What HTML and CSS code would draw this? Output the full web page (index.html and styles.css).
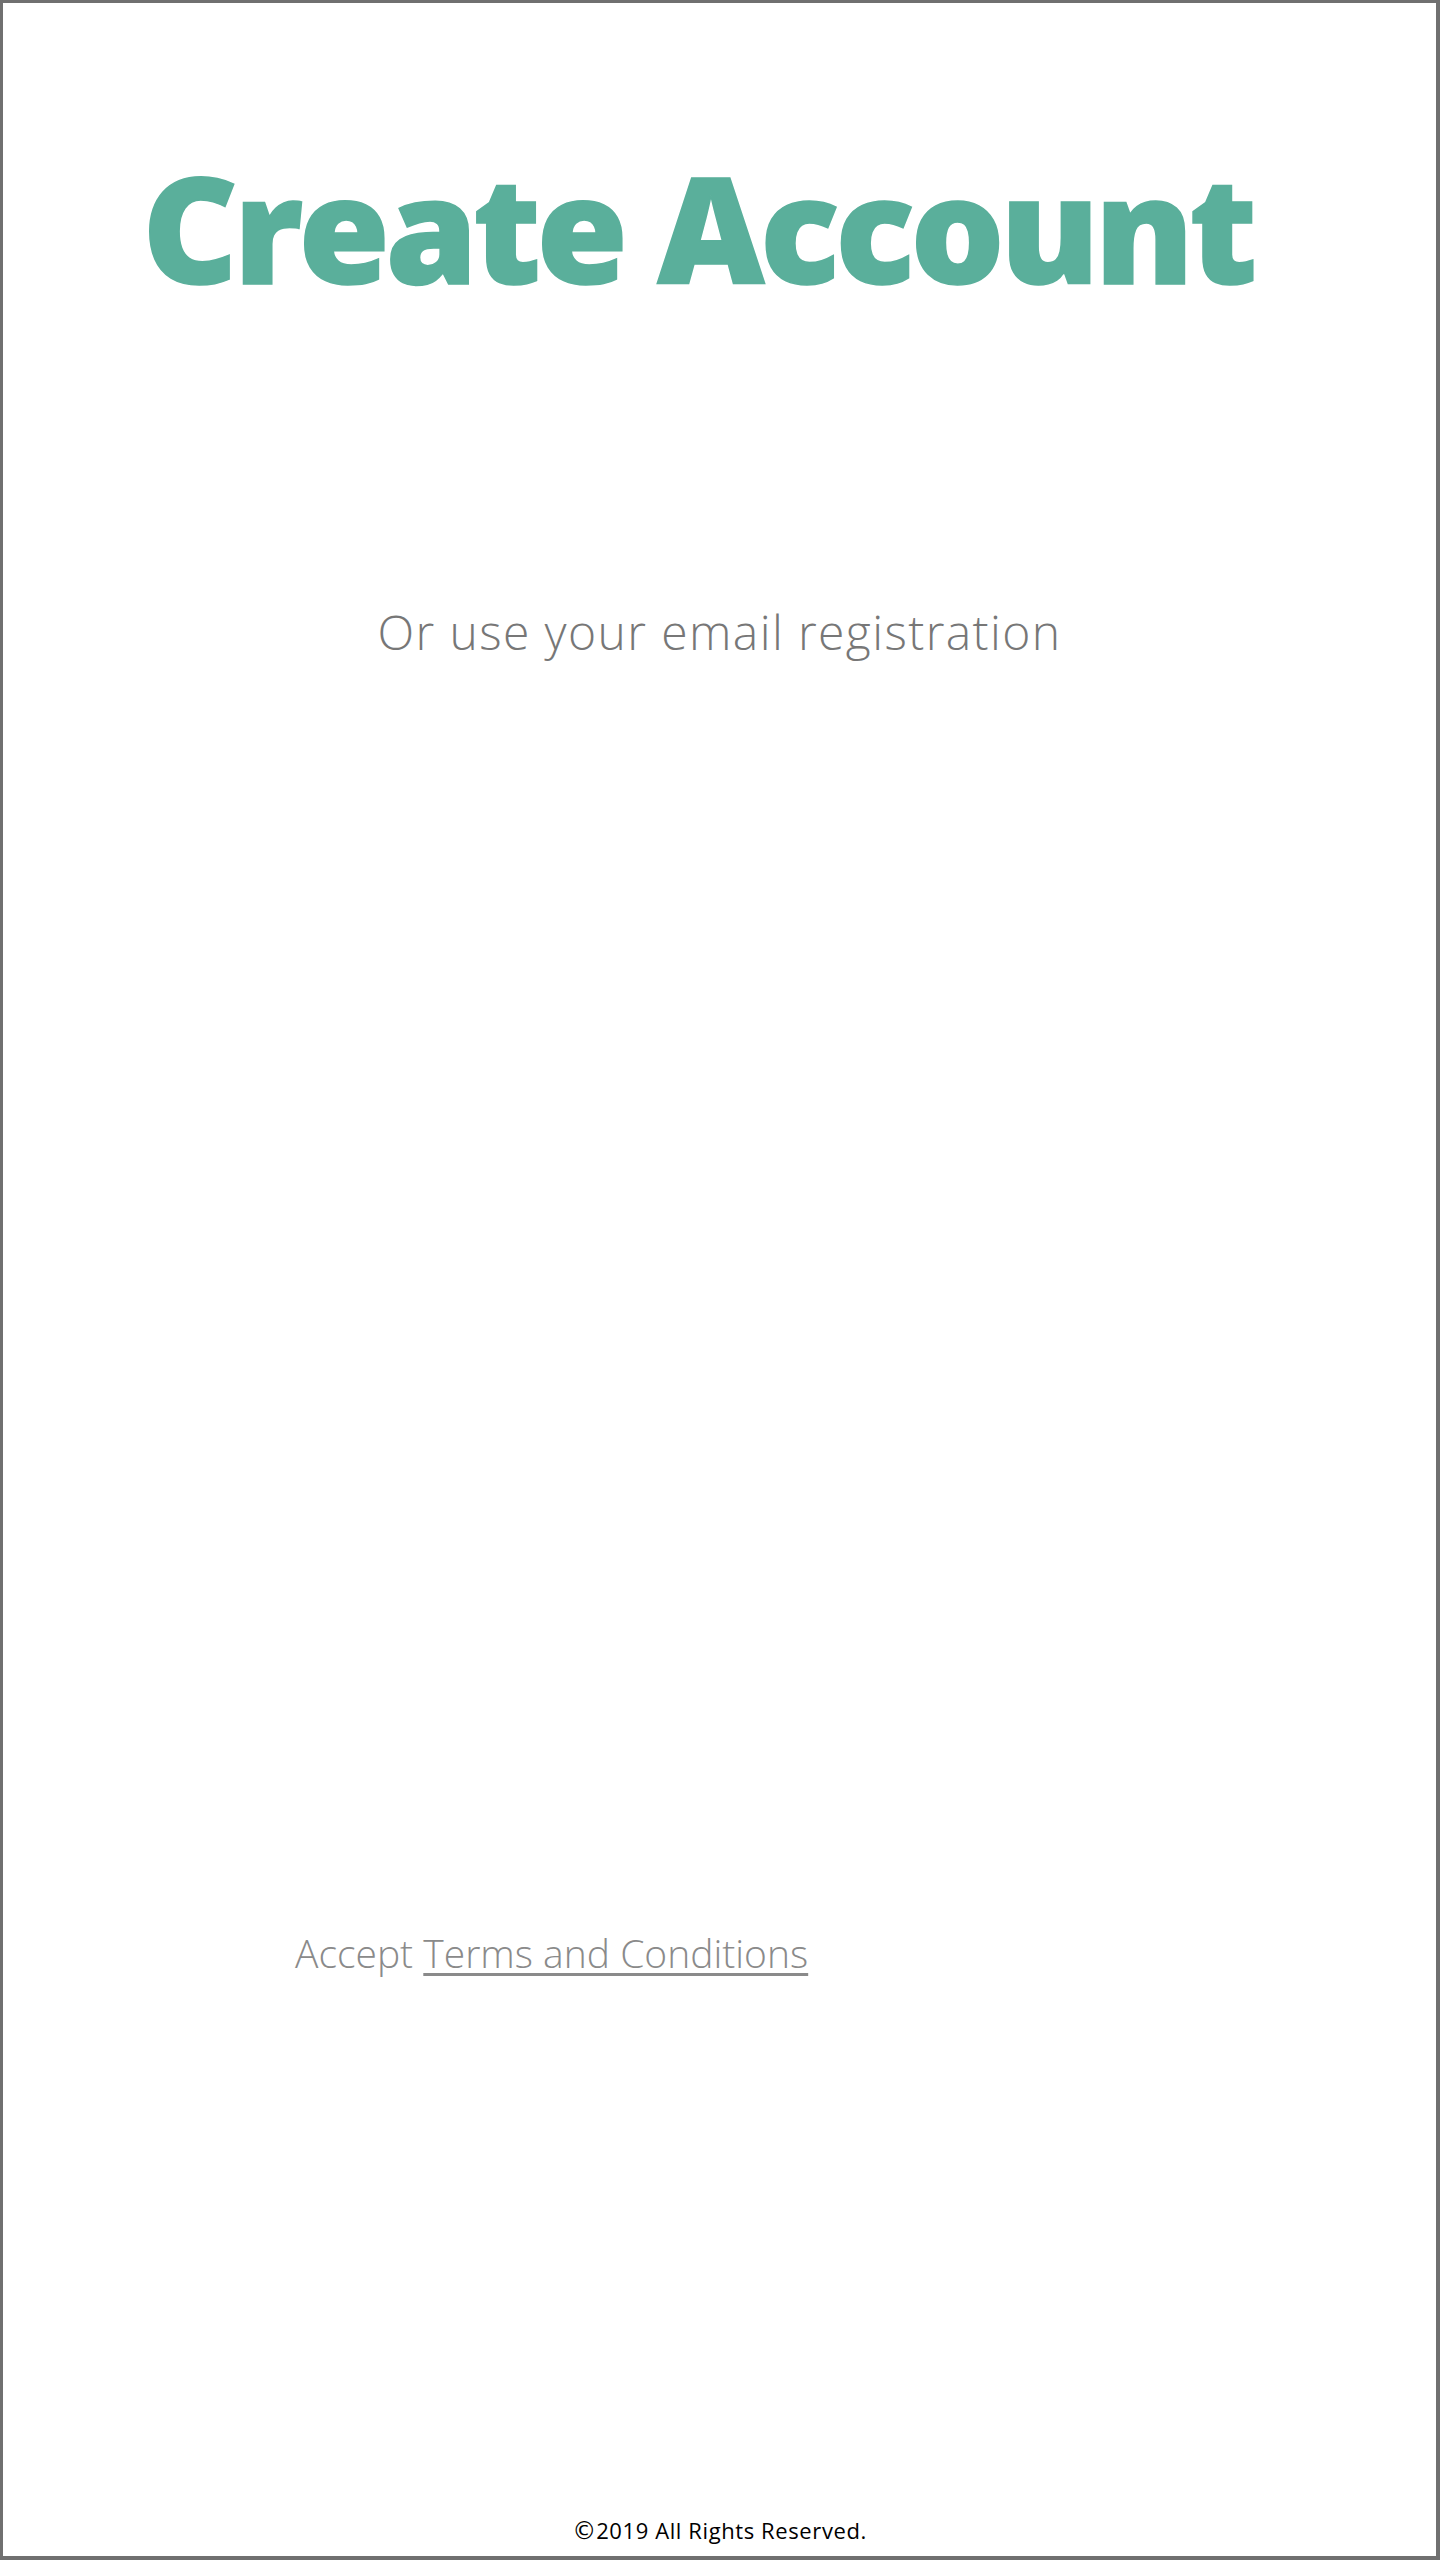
FILE: index.html
```html
<!DOCTYPE html>
<html lang="en">
<head>
<meta charset="utf-8">
<title>Create Account</title>
<link rel="stylesheet" href="styles.css">
</head>
<body>
<div class="page">
  <h1 class="title">Create Account</h1>
  <p class="subtitle">Or use your email registration</p>
  <p class="terms">Accept <a class="terms-link" href="#">Terms and Conditions</a></p>
  <footer class="footer"><span class="copy">©</span>2019 All Rights Reserved.</footer>
</div>
</body>
</html>
```
FILE: styles.css
```css
html, body {
  margin: 0;
  padding: 0;
  background: #ffffff;
}

.page {
  box-sizing: border-box;
  width: 1440px;
  height: 2560px;
  border-style: solid;
  border-color: #707070;
  border-width: 3px 4px 4px 3px;
  display: flex;
  flex-direction: column;
  font-family: "Open Sans", "Noto Sans", sans-serif;
}

.title {
  margin: 150px 0 0;
  padding-right: 44px;
  font-size: 148px;
  line-height: 1;
  font-weight: 800;
  letter-spacing: -4.6px;
  color: #5aaf9b;
  -webkit-text-stroke: 1.5px #5aaf9b;
  text-align: center;
}

.subtitle {
  margin: 307px 0 0;
  font-size: 48px;
  line-height: 1;
  font-weight: 300;
  letter-spacing: 1.4px;
  color: #777777;
  text-align: center;
}

.terms {
  margin: 1277px 0 0;
  padding-left: 292px;
  font-size: 39px;
  line-height: 1;
  font-weight: 300;
  color: #8a8a8a;
}

.terms-link {
  color: #8a8a8a;
  text-decoration: underline;
  text-decoration-thickness: 3px;
  text-underline-offset: 5px;
}

.footer {
  margin-top: auto;
  padding-bottom: 13px;
  font-size: 22px;
  line-height: 1;
  letter-spacing: 0.6px;
  color: #000000;
  text-align: center;
}

.copy {
  font-family: "DejaVu Sans", sans-serif;
  font-size: 24px;
  letter-spacing: 0;
}
```
